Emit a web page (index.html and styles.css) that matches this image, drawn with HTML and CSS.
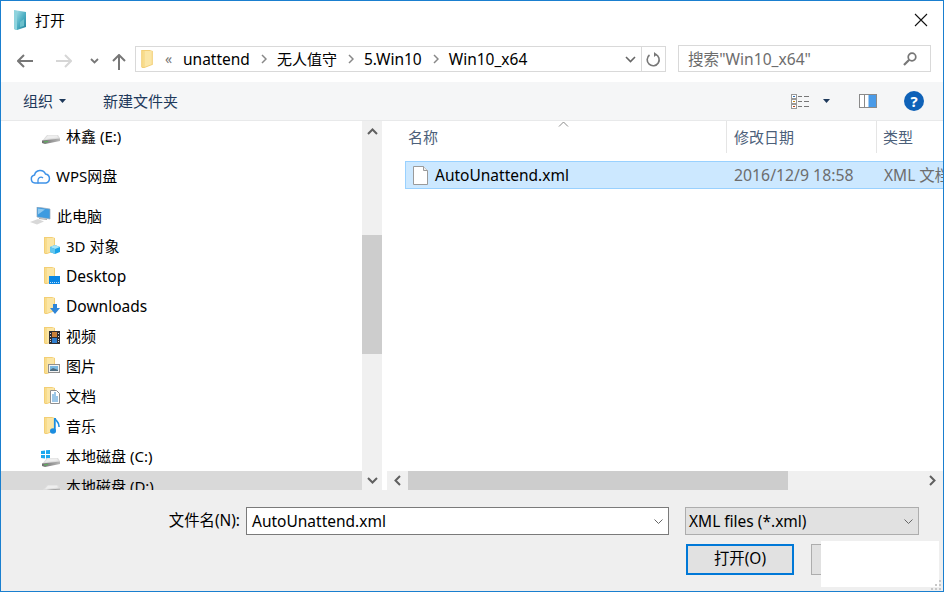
FILE: index.html
```html
<!DOCTYPE html>
<html lang="zh">
<head>
<meta charset="utf-8">
<title>打开</title>
<link rel="stylesheet" href="styles.css">
</head>
<body>
<svg class="defs" width="0" height="0">
  <defs>
    <linearGradient id="appg" x1="0" y1="0" x2="1" y2="1">
      <stop offset="0" stop-color="#b5e6ec"/>
      <stop offset=".55" stop-color="#4fb0c4"/>
      <stop offset="1" stop-color="#1f7f98"/>
    </linearGradient>
    <linearGradient id="driveg" x1="0" y1="0" x2="1" y2="0">
      <stop offset="0" stop-color="#6f6f6f"/>
      <stop offset="1" stop-color="#b8b8b8"/>
    </linearGradient>
    <symbol id="folder" viewBox="0 0 11 17">
      <path d="M0 0h8l3 1v13l-8 3H1l-1-1z" fill="#f3cf76"/>
      <path d="M3 1h7v12.500L3 16z" fill="#fbe6a6"/>
      <path d="M1 1h2v15H1z" fill="#f8dc8c"/>
    </symbol>
    <symbol id="drive" viewBox="0 0 18 9">
      <path d="M5 0h11l2 3v1L0 6z" fill="#dedede"/>
      <path d="M6 .5h9l1 2L3 4z" fill="#eeeeee"/>
      <path d="M0 5.500L18 3.500V6L3 9 0 8z" fill="url(#driveg)"/>
      <path d="M2 6.500l4-.5v1l-4 .5z" fill="#58b858"/>
    </symbol>
  </defs>
</svg>
<div class="window">
  <header class="titlebar">
    <svg class="app-icon" width="14" height="20" viewBox="0 0 14 20"><path d="M1 0l12 2v15l-9 3-3-1z" fill="url(#appg)"/><path d="M1 0l3 1v19l-3-1z" fill="#8ed3dd"/><path d="M7 12l4-3v7l-4 1z" fill="#6bc0cc"/></svg>
    <span class="title">打开</span>
    <svg class="close" width="14" height="14" viewBox="0 0 14 14"><path d="M1 1l12 12M13 1L1 13" stroke="#111" stroke-width="1.100" fill="none"/></svg>
  </header>

  <nav class="navbar">
    <div class="nav-buttons">
      <svg class="nav-back" width="16" height="14" viewBox="0 0 16 14"><path d="M1 7h15M7 1L1 7l6 6" stroke="#777" stroke-width="2" fill="none"/></svg>
      <svg class="nav-forward" width="16" height="14" viewBox="0 0 16 14"><path d="M0 7h15M9 1l6 6-6 6" stroke="#d6d6d6" stroke-width="2" fill="none"/></svg>
      <svg class="nav-down" width="9" height="6" viewBox="0 0 9 6"><path d="M1 1l3.500 3.500L8 1" stroke="#777" stroke-width="1.800" fill="none"/></svg>
      <svg class="nav-up" width="14" height="16" viewBox="0 0 14 16"><path d="M7 16V1M1 7l6-6 6 6" stroke="#777" stroke-width="2" fill="none"/></svg>
    </div>
    <div class="address">
      <svg class="addr-folder" width="12" height="18"><use href="#folder"/></svg>
      <span class="addr-more">«</span>
      <span class="crumb crumb-first lat">unattend</span>
      <svg class="sep" width="6" height="10" viewBox="0 0 6 10"><path d="M1 1l4 4-4 4" stroke="#888" stroke-width="1.500" fill="none"/></svg>
      <span class="crumb">无人值守</span>
      <svg class="sep" width="6" height="10" viewBox="0 0 6 10"><path d="M1 1l4 4-4 4" stroke="#888" stroke-width="1.500" fill="none"/></svg>
      <span class="crumb lat">5.Win10</span>
      <svg class="sep" width="6" height="10" viewBox="0 0 6 10"><path d="M1 1l4 4-4 4" stroke="#888" stroke-width="1.500" fill="none"/></svg>
      <span class="crumb lat">Win10_x64</span>
      <span class="addr-fill"></span>
      <svg class="addr-drop" width="11" height="7" viewBox="0 0 11 7"><path d="M1 1l4.500 4.500L10 1" stroke="#666" stroke-width="1.600" fill="none"/></svg>
      <span class="addr-refresh">
        <svg width="15" height="15" viewBox="0 0 15 15"><path d="M9.500 2.200A6 6 0 1 1 3.500 3" stroke="#777" stroke-width="1.600" fill="none"/><path d="M8 0v5l3-2.500z" fill="#777"/></svg>
      </span>
    </div>
    <div class="search">
      <span class="search-text">搜索"Win10_x64"</span>
      <svg width="14" height="14" viewBox="0 0 14 14"><circle cx="9" cy="5" r="3.800" stroke="#777" stroke-width="1.700" fill="none"/><path d="M6.200 7.800L1 13" stroke="#777" stroke-width="2.200"/></svg>
    </div>
  </nav>

  <div class="toolbar">
    <span class="tool tool-org">组织</span>
    <svg class="caret" width="7" height="4" viewBox="0 0 7 4"><path d="M0 0h7L3.500 4z" fill="#1e395b"/></svg>
    <span class="tool tool-new">新建文件夹</span>
    <span class="tool-fill"></span>
    <svg class="view-icon" width="18" height="15" viewBox="0 0 18 15"><rect x=".5" y=".5" width="5" height="4" fill="#fff" stroke="#999"/><rect x=".5" y="5.500" width="5" height="4" fill="#fff" stroke="#999"/><rect x=".5" y="10.500" width="5" height="4" fill="#fff" stroke="#999"/><path d="M2 2h2v1H2z" fill="#2f6fb5"/><path d="M2 7h2v1H2z" fill="#c98a1b"/><path d="M2 12h2v1H2z" fill="#b5441b"/><path d="M7 2.500h4M13 2.500h5M7 7.500h4M13 7.500h5M7 12.500h4M13 12.500h5" stroke="#777"/></svg>
    <svg class="caret caret-view" width="7" height="4" viewBox="0 0 7 4"><path d="M0 0h7L3.500 4z" fill="#1e395b"/></svg>
    <svg class="pane-icon" width="18" height="14" viewBox="0 0 18 14"><rect x=".5" y=".5" width="17" height="13" fill="#fff" stroke="#8a8a8a"/><rect x="9.500" y="1" width="7.500" height="12" fill="#4a9be8"/><path d="M5.500 1v12" stroke="#8a8a8a"/></svg>
    <span class="help">?</span>
  </div>

  <main class="main">
    <aside class="sidebar">
      <div class="tree">
        <div class="row lvl2"><svg class="ico ico-drive" width="18" height="9"><use href="#drive"/></svg><span>林鑫 (E:)</span></div>
        <div class="row lvl1 row-gap">
          <svg class="ico ico-cloud" width="21" height="16" viewBox="0 0 21 16"><path d="M5 15a4 4 0 0 1-.5-7.900A5.800 5.800 0 0 1 15.500 6 4.600 4.600 0 0 1 16 15z" fill="#fff" stroke="#3f93e8" stroke-width="1.500"/><path d="M8 15.500V12a3 3 0 0 1 5-2" fill="none" stroke="#3f93e8" stroke-width="1.300"/></svg>
          <span>WPS网盘</span>
        </div>
        <div class="row lvl1 row-gap">
          <svg class="ico ico-pc" width="21" height="18" viewBox="0 0 21 18"><path d="M7 0l13 2v10L7 10z" fill="#3d9be0" stroke="#9ab" stroke-width=".7"/><path d="M8 1.500l7 1-7 5z" fill="#8cc8f0"/><path d="M9 11l8 1v1l-8-1z" fill="#aaa"/><path d="M0 15l8-3 6 2.500-7 3z" fill="#d8d8d8"/></svg>
          <span>此电脑</span>
        </div>
        <div class="row lvl2"><span class="ico-wrap"><svg width="11" height="17"><use href="#folder"/></svg><svg class="badge" width="10" height="9" viewBox="0 0 10 9"><path d="M5 0l5 2v5L5 9 0 7V2z" fill="#1aa3e8"/><path d="M0 2l5 2 5-2-5-2z" fill="#a7e4f8"/><path d="M5 4v5L0 7V2z" fill="#62c6ee"/></svg></span><span>3D 对象</span></div>
        <div class="row lvl2"><span class="ico-wrap"><svg width="11" height="17"><use href="#folder"/></svg><svg class="badge" width="11" height="8" viewBox="0 0 11 8"><rect width="11" height="8" fill="#0a86e4"/><path d="M1 6h1v1H1zM3 6h1v1H3zM5 6h1v1H5zM7 6h1v1H7zM9 6h1v1H9z" fill="#bfe2fa"/></svg></span><span class="lat">Desktop</span></div>
        <div class="row lvl2"><span class="ico-wrap"><svg width="11" height="17"><use href="#folder"/></svg><svg class="badge" width="10" height="10" viewBox="0 0 10 10"><path d="M3 0h4v4h3L5 10 0 4h3z" fill="#2f86d8"/></svg></span><span class="lat">Downloads</span></div>
        <div class="row lvl2"><span class="ico-wrap"><svg width="11" height="17"><use href="#folder"/></svg><svg class="badge" width="11" height="13" viewBox="0 0 11 13"><rect width="11" height="13" fill="#2e2e33"/><path d="M3 1h5v5H3z" fill="#c9813a"/><path d="M3 7h5v5H3z" fill="#2f7fd0"/><path d="M1 2h1v1H1zM1 5h1v1H1zM1 8h1v1H1zM1 11h1v-1H1zM9 2h1v1H9zM9 5h1v1H9zM9 8h1v1H9zM9 11h1v-1H9z" fill="#ddd"/></svg></span><span>视频</span></div>
        <div class="row lvl2"><span class="ico-wrap"><svg width="11" height="17"><use href="#folder"/></svg><svg class="badge badge-pic" width="12" height="9" viewBox="0 0 12 9"><rect x=".5" y=".5" width="11" height="8" fill="#f4f4f4" stroke="#8f8f8f"/><path d="M2 2h8v4H2z" fill="#7ab8e0"/><path d="M2 6l3-2 5 2v1H2z" fill="#4f6d80"/></svg></span><span>图片</span></div>
        <div class="row lvl2"><span class="ico-wrap"><svg width="11" height="17"><use href="#folder"/></svg><svg class="badge" width="10" height="14" viewBox="0 0 10 14"><path d="M.5.500h6l3 3v10h-9z" fill="#fff" stroke="#8f8f8f"/><path d="M4 3h2M2 5h4M2 7h6M2 9h6M2 11h6" stroke="#3a8fd0"/></svg></span><span>文档</span></div>
        <div class="row lvl2"><span class="ico-wrap"><svg width="11" height="17"><use href="#folder"/></svg><svg class="badge" width="10" height="16" viewBox="0 0 10 16"><path d="M4.800 0v12.500" stroke="#1b8de0" stroke-width="1.800"/><ellipse cx="3" cy="13" rx="3" ry="2.800" fill="#1b8de0"/><path d="M5 0c1 4 4.500 3.500 4 9" stroke="#1b8de0" stroke-width="1.500" fill="none"/></svg></span><span>音乐</span></div>
        <div class="row lvl2"><span class="ico-wrap ico-wrap-c"><svg class="win" width="9" height="9" viewBox="0 0 9 9"><path d="M0 1l4-.6v3.600H0zM5 .3L9 0v4H5zM0 5h4v3.600L0 8zM5 5h4v4l-4-.6z" fill="#1ba8ee"/></svg><svg class="drive-win" width="18" height="9"><use href="#drive"/></svg></span><span>本地磁盘 (C:)</span></div>
        <div class="row lvl2 row-selected"><svg class="ico ico-drive" width="18" height="9"><use href="#drive"/></svg><span>本地磁盘 (D:)</span></div>
      </div>
      <div class="vscroll">
        <span class="sb-btn"><svg width="11" height="7" viewBox="0 0 11 7"><path d="M1 6l4.500-4.500L10 6" stroke="#606060" stroke-width="2" fill="none"/></svg></span>
        <span class="sb-track"><span class="sb-thumb"></span></span>
        <span class="sb-btn"><svg width="11" height="7" viewBox="0 0 11 7"><path d="M1 1l4.500 4.500L10 1" stroke="#606060" stroke-width="2" fill="none"/></svg></span>
      </div>
    </aside>

    <section class="files">
      <div class="file-head">
        <div class="col col-name">名称<svg class="sort" width="11" height="6" viewBox="0 0 11 6"><path d="M1 5.500l4.500-4.500L10 5.500" stroke="#8a8a8a" fill="none"/></svg></div>
        <div class="col col-date">修改日期</div>
        <div class="col col-type">类型</div>
      </div>
      <div class="file-body">
        <div class="file-row">
          <svg class="file-ico" width="15" height="19" viewBox="0 0 15 19"><path d="M.5.500h10l4 4v14H.5z" fill="#fff" stroke="#9a9a9a"/><path d="M10.500.500v4h4" fill="#eee" stroke="#9a9a9a"/></svg>
          <span class="file-name lat">AutoUnattend.xml</span>
          <span class="file-date">2016/12/9 18:58</span>
          <span class="file-type lat">XML 文档</span>
        </div>
      </div>
      <div class="hscroll">
        <span class="hb-btn"><svg width="7" height="11" viewBox="0 0 7 11"><path d="M6 1L1.500 5.500 6 10" stroke="#606060" stroke-width="2" fill="none"/></svg></span>
        <span class="hb-thumb"></span>
        <span class="hb-track"></span>
        <span class="hb-btn"><svg width="7" height="11" viewBox="0 0 7 11"><path d="M1 1l4.500 4.500L1 10" stroke="#606060" stroke-width="2" fill="none"/></svg></span>
      </div>
    </section>
  </main>

  <footer class="footer">
    <div class="form-row">
      <label class="fname-label">文件名(N):</label>
      <div class="fname-input"><span class="lat">AutoUnattend.xml</span><svg width="9" height="5" viewBox="0 0 9 5"><path d="M.5.500l4 4 4-4" stroke="#666" fill="none"/></svg></div>
      <div class="ftype"><span class="lat">XML files (*.xml)</span><svg width="9" height="5" viewBox="0 0 9 5"><path d="M.5.500l4 4 4-4" stroke="#666" fill="none"/></svg></div>
    </div>
    <div class="btn-row">
      <button class="btn btn-open">打开(O)</button>
      <button class="btn btn-cancel"></button>
    </div>
  </footer>
  <div class="mask"></div>
  <svg class="grip" width="11" height="11" viewBox="0 0 11 11"><path d="M8 1h2v2H8zM4 5h2v2H4zM8 5h2v2H8zM0 9h2v2H0zM4 9h2v2H4zM8 9h2v2H8z" fill="#c8c8c8"/></svg>
</div>
</body>
</html>
```

FILE: styles.css
```css
* { box-sizing: border-box; }
html, body { margin: 0; padding: 0; width: 944px; height: 592px; overflow: hidden; background: #fff; }
body { font-family: "Noto Sans", "Noto Sans CJK SC", sans-serif; font-size: 15px; color: #000; }
.defs { display: block; height: 0; }
.lat { font-size: 15.5px; }

.window { position: relative; width: 944px; height: 592px; border: 1px solid #1a7fcf; display: flex; flex-direction: column; overflow: hidden; }

.titlebar { height: 37px; display: flex; align-items: center; padding: 0 15px 0 12px; flex: none; }
.app-icon { margin-right: 8px; flex: none; }
.title { font-size: 15px; line-height: 20px; }
.close { margin-left: auto; }

.navbar { height: 44px; flex: none; display: flex; align-items: center; padding: 0 12px 0 16px; }
.nav-buttons { display: flex; align-items: center; width: 118px; flex: none; padding-top: 1px; }
.nav-forward { margin-left: 23px; }
.nav-down { margin-left: 18px; }
.nav-up { margin-left: 13px; margin-top: 2px; }

.address { width: 531px; height: 26px; border: 1px solid #d9d9d9; display: flex; align-items: center; padding-left: 5px; flex: none; margin-bottom: 2px; }
.addr-folder { flex: none; }
.addr-more { margin-left: 12px; color: #777; font-size: 14px; width: 12px; line-height: 20px; }
.crumb { line-height: 20px; white-space: nowrap; }
.crumb-first { margin-left: 6px; }
.sep { margin: 0 10px 0 11px; flex: none; }
.addr-fill { flex: 1; }
.addr-drop { flex: none; margin-right: 5px; }
.addr-refresh { width: 24px; height: 24px; border-left: 1px solid #d9d9d9; display: flex; align-items: center; justify-content: center; flex: none; }

.search { width: 253px; height: 27px; border: 1px solid #d9d9d9; margin-left: 12px; margin-bottom: 3px; display: flex; align-items: center; justify-content: space-between; padding: 0 13px 0 9px; flex: none; }
.search-text { color: #6d6d6d; font-size: 15.6px; line-height: 20px; white-space: nowrap; }

.toolbar { height: 39px; flex: none; background: #f5f6f7; border-bottom: 1px solid #e8e9ea; display: flex; align-items: center; padding: 0 19px 0 22px; }
.tool { color: #1e395b; font-size: 15px; line-height: 20px; }
.caret { margin-left: 6px; flex: none; }
.tool-new { margin-left: 37px; }
.tool-fill { flex: 1; }
.caret-view { margin-left: 14px; }
.view-icon { flex: none; }
.pane-icon { margin-left: 29px; flex: none; }
.help { width: 20px; height: 20px; border-radius: 50%; background: #0f62b8; color: #fff; font-weight: 700; font-size: 15px; line-height: 20px; text-align: center; margin-left: 27px; flex: none; }

.main { height: 369px; flex: none; display: flex; }
.sidebar { width: 381px; flex: none; display: flex; }
.tree { width: 361px; height: 369px; overflow: hidden; flex: none; }
.row { height: 30px; display: flex; align-items: center; white-space: nowrap; line-height: 20px; }
.row-gap { margin-top: 10px; }
.lvl1 { padding-left: 29px; }
.lvl2 { padding-left: 40px; }
.row-selected { background: #d9d9d9; }
.ico { flex: none; }
.ico-drive { margin: 0 6px 7px 1px; align-self: flex-end; }
.ico-cloud { margin-right: 5px; }
.ico-pc { margin-right: 6px; }
.ico-wrap { position: relative; width: 25px; height: 18px; flex: none; display: block; }
.ico-wrap svg { display: block; margin-left: 3px; }
.ico-wrap .badge { position: absolute; right: 6px; bottom: 1px; margin: 0; }
.ico-wrap .badge-pic { bottom: 2px; }
.ico-wrap-c .drive-win { position: absolute; left: 1px; top: 11px; margin: 0; }
.ico-wrap-c .win { position: absolute; left: 0; top: 3px; margin: 0; }

.vscroll { width: 20px; flex: none; background: #f0f0f0; display: flex; flex-direction: column; }
.sb-btn { height: 20px; flex: none; display: flex; align-items: center; justify-content: center; }
.sb-track { flex: 1; display: block; padding-top: 94px; }
.sb-thumb { display: block; height: 119px; background: #cdcdcd; }

.files { flex: 1; min-width: 0; margin-left: 5px; display: flex; flex-direction: column; }
.file-head { height: 32px; flex: none; display: flex; align-items: stretch; color: #4c607a; line-height: 20px; }
.col { display: flex; align-items: center; position: relative; white-space: nowrap; }
.col-name { width: 340px; padding-left: 21px; border-right: 1px solid #e5e5e5; }
.col-date { width: 150px; padding-left: 7px; border-right: 1px solid #e5e5e5; }
.col-type { padding-left: 6px; }
.sort { position: absolute; left: 171px; top: 0; }
.file-body { flex: 1; padding: 8px 0 0 18px; overflow: hidden; }
.file-row { height: 28px; width: 541px; background: #cce8ff; border: 1px solid #99d1ff; display: flex; align-items: center; white-space: nowrap; overflow: hidden; line-height: 20px; }
.file-ico { margin-left: 7px; flex: none; }
.file-name { margin-left: 7px; width: 299px; flex: none; }
.file-date { color: #6d6d6d; font-size: 15.8px; width: 150px; flex: none; }
.file-type { color: #6d6d6d; flex: none; }

.hscroll { height: 19px; flex: none; display: flex; background: #f0f0f0; }
.hb-btn { width: 21px; flex: none; display: flex; align-items: center; justify-content: center; }
.hb-thumb { width: 380px; background: #cdcdcd; flex: none; }
.hb-track { flex: 1; }

.footer { flex: 1; background: #efefef; padding: 17px 0 0; display: flex; flex-direction: column; }
.form-row { display: flex; align-items: center; height: 28px; }
.fname-label { width: 239px; text-align: right; font-size: 15.4px; line-height: 20px; }
.fname-input { width: 423px; height: 28px; margin-left: 6px; background: #fff; border: 1px solid #7a7a7a; display: flex; align-items: center; justify-content: space-between; padding: 0 5px; line-height: 20px; flex: none; }
.ftype { width: 234px; height: 28px; margin-left: 16px; background: #e1e1e1; border: 1px solid #adadad; display: flex; align-items: center; justify-content: space-between; padding: 0 5px 0 3px; line-height: 20px; flex: none; }
.btn-row { display: flex; margin-top: 9px; padding-left: 685px; }
.btn { height: 31px; background: #e1e1e1; font-family: inherit; font-size: 15.4px; color: #000; padding: 0 0 1px; line-height: 20px; }
.btn-open { width: 108px; border: 2px solid #0078d7; }
.btn-cancel { width: 108px; margin-left: 17px; border: 1px solid #adadad; }

.mask { position: absolute; left: 820px; top: 540px; width: 118px; height: 46px; background: #fff; }
.grip { position: absolute; right: 1px; bottom: 1px; }
```
